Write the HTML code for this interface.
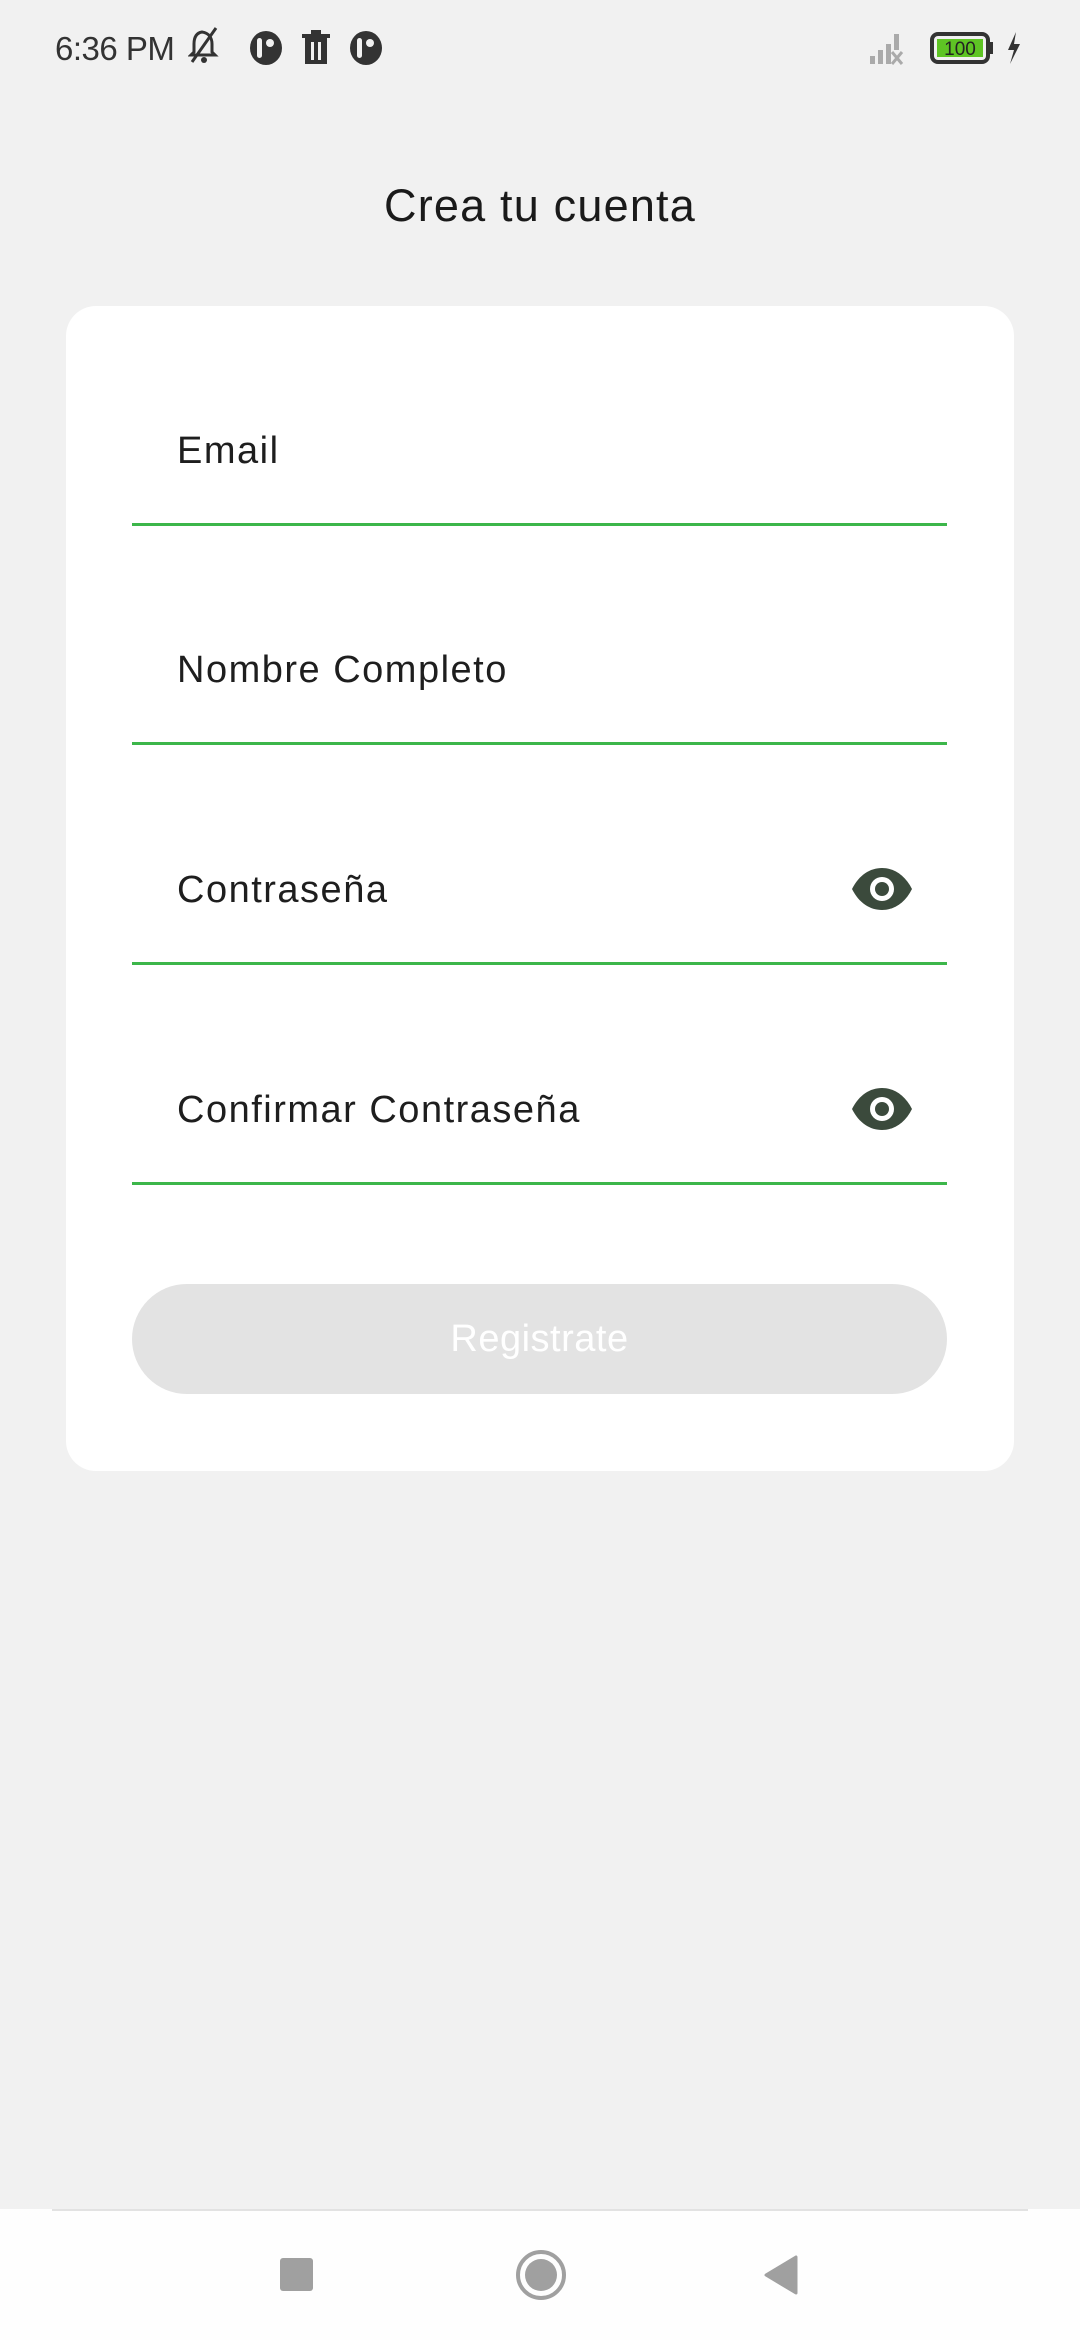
<!DOCTYPE html>
<html><head><meta charset="utf-8"><style>
*{margin:0;padding:0;box-sizing:border-box}
body{width:1080px;height:2340px;background:#f1f1f1;position:relative;overflow:hidden;font-family:"Liberation Sans",sans-serif}
.abs{position:absolute}
.lbl{position:absolute;left:177px;font-size:38px;color:#1e1e1e;line-height:1;letter-spacing:1.5px}
.line{position:absolute;left:132px;width:815px;height:3px;background:#3cb64a}
.eye{position:absolute;left:851px;width:62px;height:44px}
</style></head><body>
<div class="abs" style="left:55px;top:30px;font-size:33px;color:#333;letter-spacing:-0.5px">6:36 PM</div>
<svg class="abs" style="left:188px;top:26px" width="200" height="40" viewBox="0 0 200 40">
<g fill="#333"><path d="M14 6c-6 1-8 6-8 12v8l-3 3h24l-3-3v-8c0-6-3-11-10-12z" fill="none" stroke="#333" stroke-width="3"/><line x1="4" y1="36" x2="28" y2="2" stroke="#333" stroke-width="3"/><circle cx="16" cy="34" r="3"/>
<ellipse cx="78" cy="22" rx="16" ry="17"/><rect x="69" y="12" width="5" height="20" rx="2.5" fill="#f1f1f1"/><circle cx="82" cy="17" r="4" fill="#f1f1f1"/>
<rect x="117" y="12" width="22" height="26"/><rect x="114" y="8" width="28" height="4"/><rect x="123" y="4" width="10" height="4"/><rect x="123" y="16" width="3" height="18" fill="#f1f1f1"/><rect x="130" y="16" width="3" height="18" fill="#f1f1f1"/>
<ellipse cx="178" cy="22" rx="16" ry="17"/><rect x="169" y="12" width="5" height="20" rx="2.5" fill="#f1f1f1"/><circle cx="182" cy="17" r="4" fill="#f1f1f1"/></g></svg>
<svg class="abs" style="left:868px;top:30px" width="160" height="36" viewBox="0 0 160 36">
<g fill="#aaa"><rect x="2" y="26" width="5" height="8"/><rect x="10" y="20" width="5" height="14"/><rect x="18" y="14" width="5" height="20"/><rect x="26" y="4" width="5" height="16"/><path d="M24 22l10 12M34 22l-10 12" stroke="#aaa" stroke-width="3"/></g>
<rect x="64" y="4" width="56" height="28" rx="6" fill="none" stroke="#333" stroke-width="4"/><rect x="69" y="9" width="46" height="18" fill="#5ec424"/><rect x="122" y="12" width="3" height="12" fill="#333"/>
<text x="92" y="25" font-size="19" text-anchor="middle" fill="#222" font-family="Liberation Sans">100</text>
<path d="M148 2l-8 18h6l-4 14 10-20h-6z" fill="#333"/></svg>
<div class="abs" style="left:0;width:1080px;top:180px;text-align:center;font-size:45px;color:#1a1a1a;letter-spacing:1.2px">Crea tu cuenta</div>
<div class="abs" style="left:66px;top:306px;width:948px;height:1165px;background:#fff;border-radius:30px"></div>
<div class="lbl" style="top:432px">Email</div><div class="line" style="top:523px"></div>
<div class="lbl" style="top:651px">Nombre Completo</div><div class="line" style="top:742px"></div>
<div class="lbl" style="top:871px">Contraseña</div><div class="line" style="top:962px"></div>
<div class="lbl" style="top:1091px">Confirmar Contraseña</div><div class="line" style="top:1182px"></div>
<svg class="eye" style="top:867px" viewBox="0 0 62 44"><path d="M1 22C8 8 19 1 31 1s23 7 30 21c-7 14-18 21-30 21S8 36 1 22z" fill="#3b4a3c"/><circle cx="31" cy="22" r="12" fill="#fff"/><circle cx="31" cy="22" r="7" fill="#3b4a3c"/></svg>
<svg class="eye" style="top:1087px" viewBox="0 0 62 44"><path d="M1 22C8 8 19 1 31 1s23 7 30 21c-7 14-18 21-30 21S8 36 1 22z" fill="#3b4a3c"/><circle cx="31" cy="22" r="12" fill="#fff"/><circle cx="31" cy="22" r="7" fill="#3b4a3c"/></svg>
<div class="abs" style="left:132px;top:1284px;width:815px;height:110px;border-radius:55px;background:#e3e3e3;color:#fff;font-size:38px;text-align:center;line-height:110px;letter-spacing:0.5px">Registrate</div>
<div class="abs" style="left:0;top:2209px;width:1080px;height:131px;background:#fefefe"></div>
<div class="abs" style="left:52px;top:2209px;width:976px;height:2px;background:#e2e2e2"></div>
<div class="abs" style="left:280px;top:2258px;width:33px;height:33px;background:#a0a0a0;border-radius:3px"></div>
<div class="abs" style="left:516px;top:2250px;width:50px;height:50px;border:4px solid #a0a0a0;border-radius:50%"></div>
<div class="abs" style="left:525px;top:2259px;width:32px;height:32px;background:#a0a0a0;border-radius:50%"></div>
<svg class="abs" style="left:762px;top:2255px" width="36" height="40" viewBox="0 0 36 40"><path d="M34 2v36L4 20z" fill="#a0a0a0" stroke="#a0a0a0" stroke-linejoin="round" stroke-width="3"/></svg>
</body></html>
